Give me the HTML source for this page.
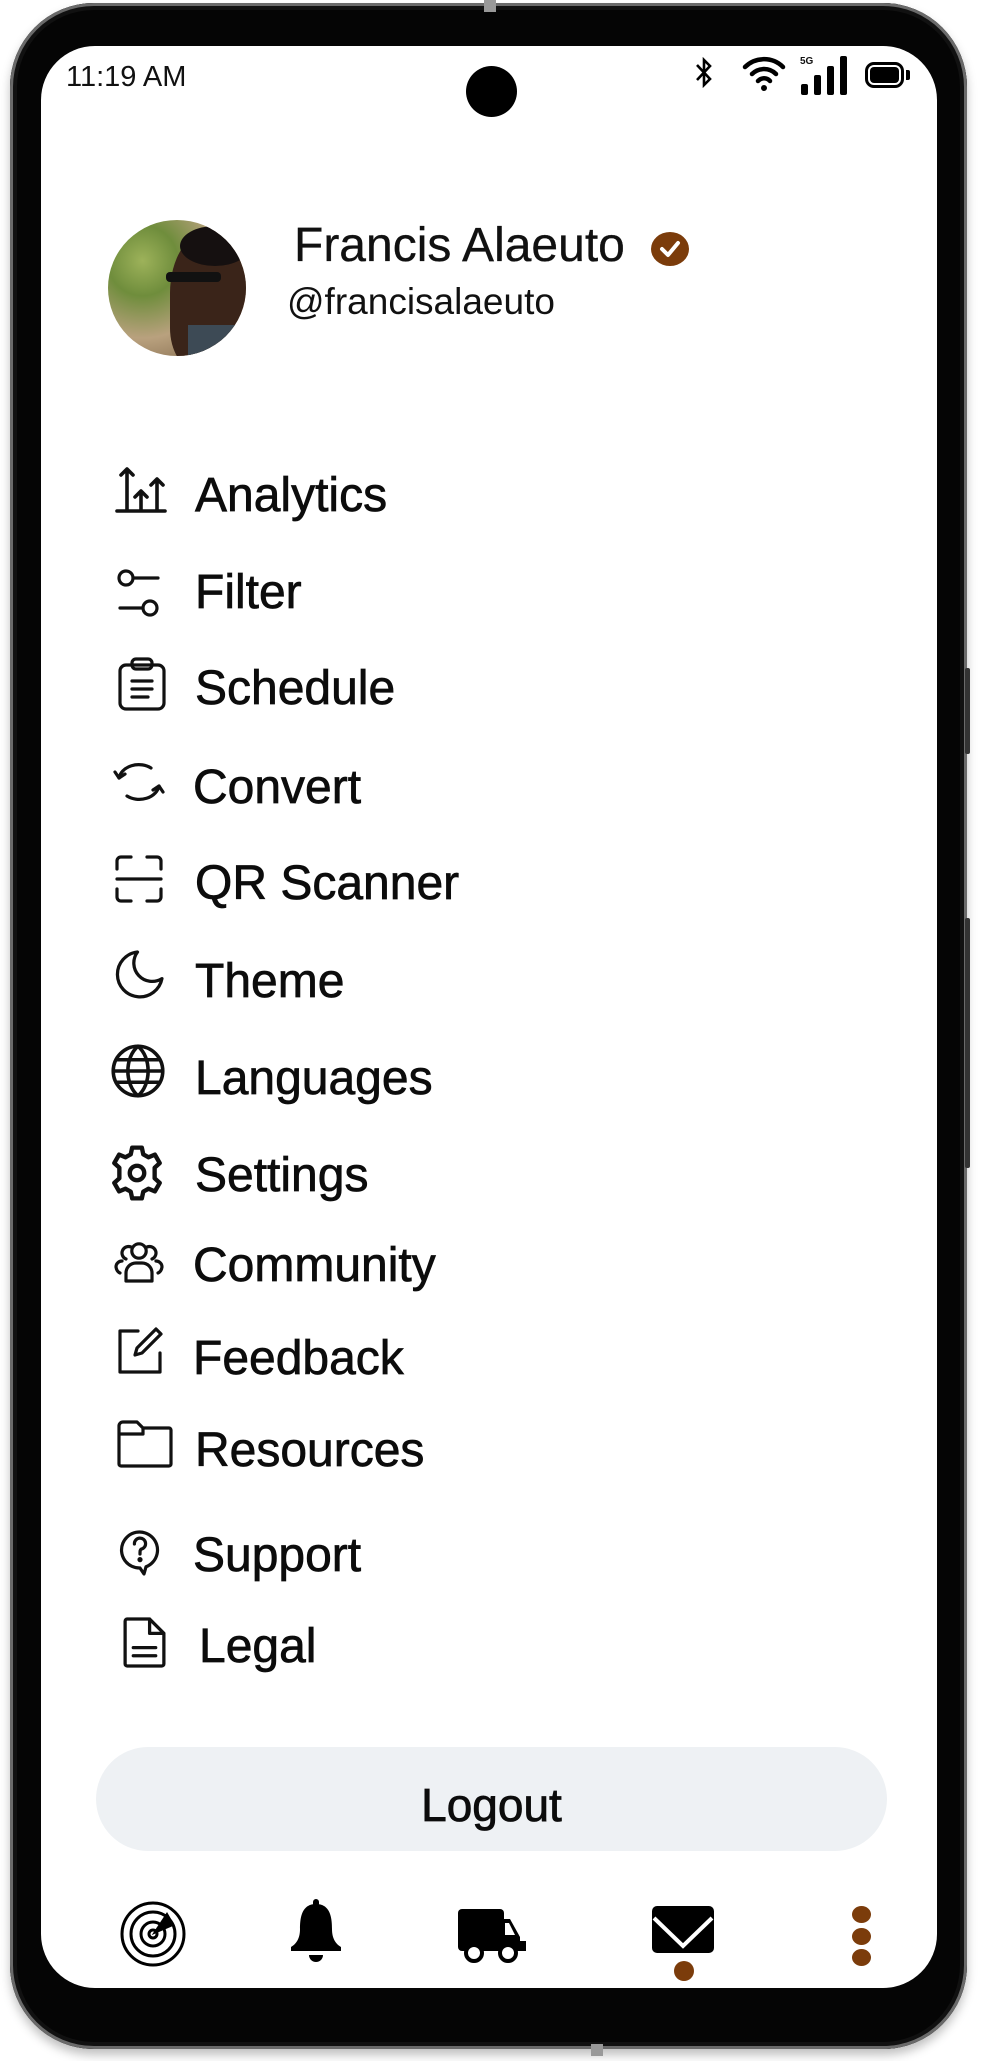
<!DOCTYPE html>
<html><head><meta charset="utf-8">
<style>
html,body{margin:0;padding:0;background:#fff;}
body{width:983px;height:2061px;position:relative;overflow:hidden;font-family:"Liberation Sans",sans-serif;color:#111;}
.frame{position:absolute;left:10px;top:3px;width:957px;height:2046px;border-radius:84px;background:#050505;box-shadow:inset 0 0 0 3px #6a6a6a,inset 0 0 0 7px #111,0 6px 10px rgba(0,0,0,.25);}
.screen{position:absolute;left:41px;top:46px;width:896px;height:1942px;border-radius:54px;background:#fff;overflow:hidden;}
.abs{position:absolute;}
.item{position:absolute;left:195px;font-size:48px;line-height:1;white-space:nowrap;color:#0c0c0c;-webkit-text-stroke:0.7px #0c0c0c;}
svg.ic{position:absolute;fill:none;stroke:#111;stroke-width:1.6;stroke-linecap:round;stroke-linejoin:round;overflow:visible;}
</style></head><body>
<div class="frame"></div>
<div class="abs" style="left:484px;top:0;width:12px;height:12px;background:#999"></div>
<div class="abs" style="left:591px;top:2044px;width:12px;height:12px;background:#999"></div>
<div class="abs" style="left:965px;top:668px;width:5px;height:86px;background:#333;border-radius:2px"></div>
<div class="abs" style="left:965px;top:918px;width:5px;height:250px;background:#333;border-radius:2px"></div>
<div class="screen"></div>

<!-- status bar -->
<div class="abs" style="left:66px;top:63px;font-size:29px;line-height:1;color:#111">11:19 AM</div>
<div class="abs" style="left:466px;top:66px;width:51px;height:51px;border-radius:50%;background:#000"></div>
<svg class="abs" style="left:695px;top:57px" width="18" height="31" viewBox="0 0 18 31"><path d="M2 8 L15 22 L9 28 L9 3 L15 9 L2 23" fill="none" stroke="#000" stroke-width="2.6" stroke-linejoin="miter"/></svg>
<svg class="abs" style="left:742px;top:55px" width="44" height="36" viewBox="0 0 44 36"><path d="M3 12 A27 27 0 0 1 41 12" stroke="#000" stroke-width="4.5" fill="none" stroke-linecap="round"/><path d="M10 19 A17 17 0 0 1 34 19" stroke="#000" stroke-width="4.5" fill="none" stroke-linecap="round"/><path d="M16 26 A8 8 0 0 1 28 26" stroke="#000" stroke-width="4.5" fill="none" stroke-linecap="round"/><circle cx="22" cy="33" r="3" fill="#000"/></svg>
<div class="abs" style="left:800px;top:57px;font-size:10px;font-weight:bold;line-height:1">5G</div>
<div class="abs" style="left:801px;top:84px;width:7px;height:11px;background:#000;border-radius:2px"></div>
<div class="abs" style="left:814px;top:75px;width:7px;height:20px;background:#000;border-radius:2px"></div>
<div class="abs" style="left:827px;top:66px;width:7px;height:29px;background:#000;border-radius:2px"></div>
<div class="abs" style="left:840px;top:56px;width:7px;height:39px;background:#000;border-radius:2px"></div>
<div class="abs" style="left:865px;top:62px;width:39px;height:26px;border:3px solid #000;border-radius:9px;box-sizing:border-box"></div>
<div class="abs" style="left:870px;top:67px;width:29px;height:16px;background:#000;border-radius:4px"></div>
<div class="abs" style="left:906px;top:70px;width:4px;height:10px;background:#000;border-radius:0 2px 2px 0"></div>

<!-- profile -->
<div class="abs" style="left:108px;top:220px;width:138px;height:136px;border-radius:50%;overflow:hidden;background:radial-gradient(circle at 25% 30%,#9db25a 0,#6f8d3c 25%,#b9a17e 55%,#8d7456 80%)">
 <div class="abs" style="left:62px;top:10px;width:90px;height:140px;border-radius:45% 40% 30% 30%;background:#3a2419"></div>
 <div class="abs" style="left:72px;top:6px;width:70px;height:40px;border-radius:50%;background:#151010"></div>
 <div class="abs" style="left:58px;top:52px;width:55px;height:10px;background:#111;border-radius:4px"></div>
 <div class="abs" style="left:80px;top:105px;width:60px;height:40px;background:#3d4a55"></div>
</div>
<div class="abs" style="left:294px;top:222px;font-size:48px;line-height:1;color:#111;-webkit-text-stroke:0.3px #111">Francis Alaeuto</div>
<svg class="abs" style="left:651px;top:232px" width="38" height="34" viewBox="0 0 38 34"><ellipse cx="19" cy="17" rx="19" ry="17" fill="#7b3c0b"/><path d="M11 17 L17 23 L27 11" stroke="#fff" stroke-width="4" fill="none" stroke-linecap="round" stroke-linejoin="round"/></svg>
<div class="abs" style="left:287px;top:283px;font-size:37px;line-height:1;color:#111">@francisalaeuto</div>

<!-- menu -->
<div class="item" style="top:472px">Analytics</div>
<div class="item" style="top:569px">Filter</div>
<div class="item" style="top:665px">Schedule</div>
<div class="item" style="left:193px;top:764px">Convert</div>
<div class="item" style="top:860px">QR Scanner</div>
<div class="item" style="top:958px">Theme</div>
<div class="item" style="top:1055px">Languages</div>
<div class="item" style="top:1152px">Settings</div>
<div class="item" style="left:193px;top:1242px">Community</div>
<div class="item" style="left:193px;top:1335px">Feedback</div>
<div class="item" style="top:1427px">Resources</div>
<div class="item" style="left:193px;top:1532px">Support</div>
<div class="item" style="left:199px;top:1623px">Legal</div>

<!-- icons -->
<svg class="ic" style="left:115px;top:465px;stroke-width:1.8" width="52" height="48" viewBox="0 0 26 24"><path d="M1 23 H25 M6 23 V2 M3 5 L6 2 L9 5 M13 23 V13 M10 16 L13 13 L16 16 M21 23 V7 M18 10 L21 7 L24 10"/></svg>
<svg class="ic" style="left:116px;top:566px" width="46" height="54" viewBox="0 0 23 27"><circle cx="5" cy="6" r="3.5"/><path d="M8.5 6 H21"/><circle cx="17" cy="21" r="3.5"/><path d="M13.5 21 H2"/></svg>
<svg class="ic" style="left:118px;top:657px" width="48" height="54" viewBox="0 0 24 27"><rect x="1" y="4" width="22" height="22" rx="3"/><rect x="7" y="1" width="10" height="5" rx="2"/><path d="M7 12 H17 M7 16 H17 M7 20 H15"/></svg>
<svg class="ic" style="left:113px;top:760px" width="52" height="44" viewBox="0 0 26 22"><path d="M3 9 A10 8 0 0 1 19 4"/><path d="M1 6 L3 9 L6 7"/><path d="M23 13 A10 8 0 0 1 7 18"/><path d="M25 16 L23 13 L20 15"/></svg>
<svg class="ic" style="left:115px;top:855px" width="48" height="48" viewBox="0 0 24 24"><path d="M1 7 V3 A2 2 0 0 1 3 1 H8 M16 1 H21 A2 2 0 0 1 23 3 V7 M23 17 V21 A2 2 0 0 1 21 23 H16 M8 23 H3 A2 2 0 0 1 1 21 V17 M1 12 H23"/></svg>
<svg class="ic" style="left:115px;top:950px" width="49" height="49" viewBox="0 0 24 24"><path d="M11 1 A11 11 0 1 0 23 14 A9 9 0 0 1 11 1 Z"/></svg>
<svg class="ic" style="left:111px;top:1044px" width="54" height="54" viewBox="0 0 24 24"><circle cx="12" cy="12" r="11"/><path d="M1 12 H23 M2.5 7 H21.5 M2.5 17 H21.5 M12 1 C6 6 6 18 12 23 C18 18 18 6 12 1 Z"/></svg>
<svg class="ic" style="left:108px;top:1144px;stroke-width:1.8" width="58" height="58" viewBox="0 0 24 24"><path d="M10 1.5 H14 L14.6 4.3 L16.8 5.5 L19.4 4.4 L21.4 7.9 L19.3 9.8 V14.2 L21.4 16.1 L19.4 19.6 L16.8 18.5 L14.6 19.7 L14 22.5 H10 L9.4 19.7 L7.2 18.5 L4.6 19.6 L2.6 16.1 L4.7 14.2 V9.8 L2.6 7.9 L4.6 4.4 L7.2 5.5 L9.4 4.3 Z"/><circle cx="12" cy="12" r="3"/></svg>
<svg class="ic" style="left:114px;top:1241px" width="50" height="42" viewBox="0 0 25 21"><circle cx="12.5" cy="5" r="3.6"/><path d="M6 20 V16 A5 5 0 0 1 11 11 H14 A5 5 0 0 1 19 16 V20 Z"/><path d="M8.5 3 A3 3 0 1 0 6 9 M3 16 A3 4 0 0 1 1 13 A3 3 0 0 1 4 10"/><path d="M16.5 3 A3 3 0 1 1 19 9 M22 16 A3 4 0 0 0 24 13 A3 3 0 0 0 21 10"/></svg>
<svg class="ic" style="left:118px;top:1327px" width="44" height="47" viewBox="0 0 22 23.5"><path d="M10 2 H1 V22.5 H21 V13"/><path d="M19 1 L21.5 3.5 L12 13 L8.5 14 L9.5 10.5 Z"/></svg>
<svg class="ic" style="left:117px;top:1420px" width="56" height="48" viewBox="0 0 28 24"><path d="M1 3 A2 2 0 0 1 3 1 H10 L13 4 H26 A1 1 0 0 1 27 5 V22 A1 1 0 0 1 26 23 H2 A1 1 0 0 1 1 22 Z M1 7 H13 L13 4"/></svg>
<svg class="ic" style="left:120px;top:1528px" width="40" height="48" viewBox="0 0 20 24"><path d="M10 20 A9 9 0 1 1 13 19.4 L12 23 Z"/><path d="M7.2 8 A2.8 2.8 0 1 1 10.5 10.6 C10 11 10 11.5 10 13"/><circle cx="10" cy="15.8" r="0.5" fill="#111"/></svg>
<svg class="ic" style="left:123px;top:1617px" width="43" height="51" viewBox="0 0 21 25"><path d="M1 2 A1 1 0 0 1 2 1 H13 L20 8 V23 A1 1 0 0 1 19 24 H2 A1 1 0 0 1 1 23 Z M13 1 V8 H20 M5 15 H16 M5 19 H16"/></svg>

<!-- logout -->
<div class="abs" style="left:96px;top:1747px;width:791px;height:104px;border-radius:52px;background:#eef1f4"></div>
<div class="abs" style="left:96px;top:1782px;width:791px;text-align:center;font-size:46px;line-height:1;color:#0c0c0c;-webkit-text-stroke:0.8px #0c0c0c">Logout</div>

<!-- bottom nav -->
<svg class="abs" style="left:120px;top:1901px" width="66" height="66" viewBox="0 0 66 66" fill="none" stroke="#000"><circle cx="33" cy="33" r="31" stroke-width="3"/><circle cx="33" cy="33" r="22" stroke-width="3"/><circle cx="33" cy="33" r="12" stroke-width="3"/><circle cx="33" cy="33" r="4" stroke-width="3"/><path d="M33 33 L47 12 L54 24 Z" fill="#000"/></svg>
<svg class="abs" style="left:288px;top:1899px" width="56" height="64" viewBox="0 0 56 64"><rect x="25" y="0" width="6" height="8" rx="3" fill="#000"/><path d="M28 5 C14 5 12 18 12 30 C12 40 8 45 3 48 V52 H53 V48 C48 45 44 40 44 30 C44 18 42 5 28 5 Z" fill="#000"/><path d="M21 56 H35 A7 7 0 0 1 21 56 Z" fill="#000"/></svg>
<svg class="abs" style="left:458px;top:1907px" width="68" height="57" viewBox="0 0 68 57"><rect x="0" y="2" width="46" height="42" rx="4" fill="#000"/><path d="M44 12 H52 L62 30 V44 H44 Z" fill="#000"/><path d="M47 16 H51 L57 28 H47 Z" fill="#fff"/><rect x="60" y="34" width="8" height="10" fill="#000"/><circle cx="16" cy="46" r="8" fill="#fff" stroke="#000" stroke-width="4"/><circle cx="50" cy="46" r="8" fill="#fff" stroke="#000" stroke-width="4"/></svg>
<svg class="abs" style="left:652px;top:1906px" width="62" height="48" viewBox="0 0 62 48"><rect x="0" y="0" width="62" height="47" rx="5" fill="#000"/><path d="M2 12 L31 40 L60 12" stroke="#fff" stroke-width="4" fill="none"/></svg>
<div class="abs" style="left:674px;top:1961px;width:20px;height:20px;border-radius:50%;background:#7b3c0b"></div>
<div class="abs" style="left:852px;top:1906px;width:19px;height:17px;border-radius:50%;background:#7b3c0b"></div>
<div class="abs" style="left:852px;top:1928px;width:19px;height:17px;border-radius:50%;background:#7b3c0b"></div>
<div class="abs" style="left:852px;top:1949px;width:19px;height:17px;border-radius:50%;background:#7b3c0b"></div>
</body></html>
